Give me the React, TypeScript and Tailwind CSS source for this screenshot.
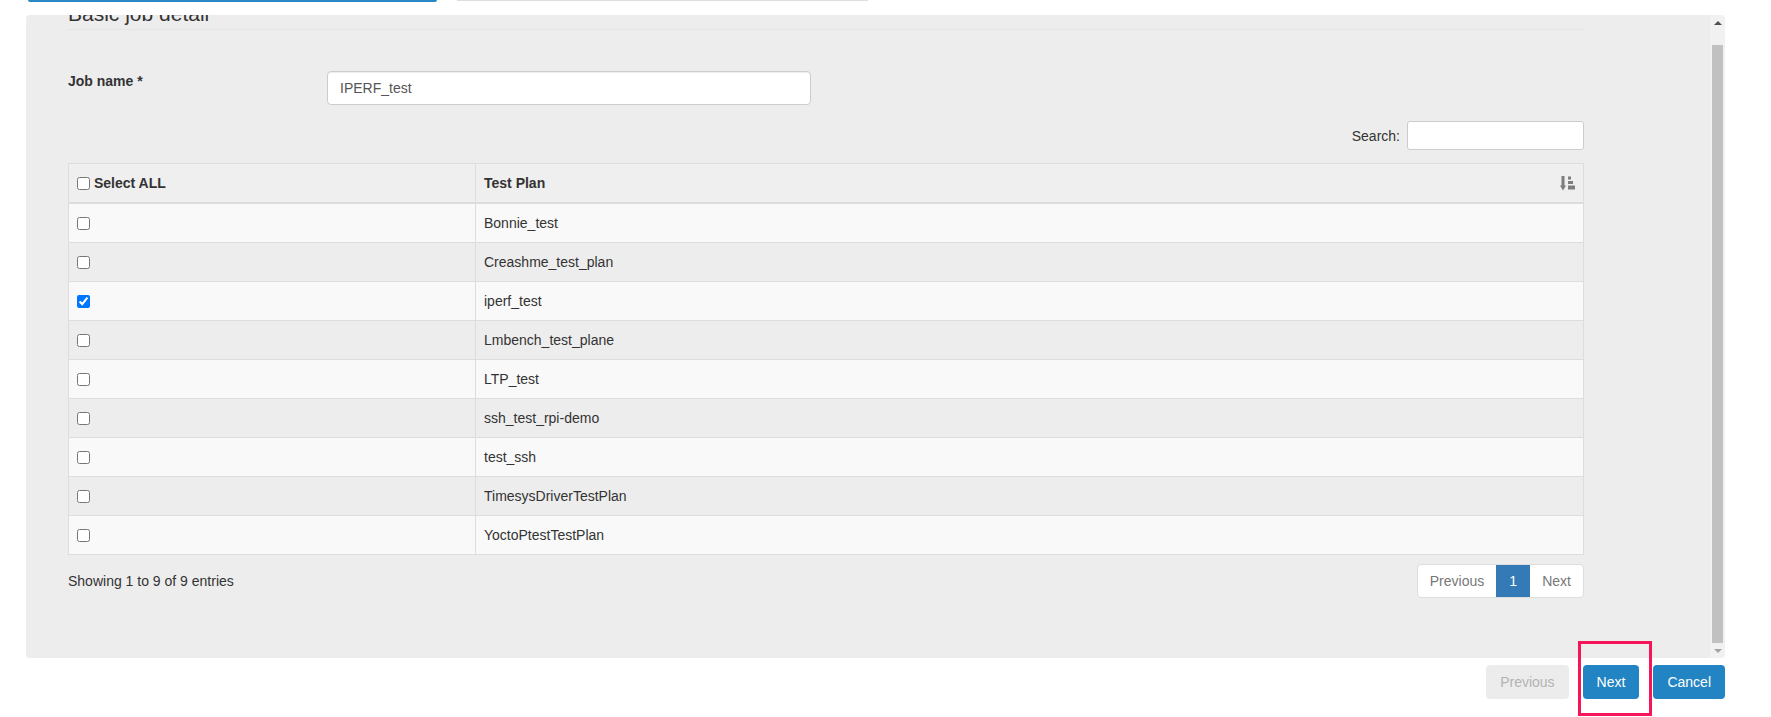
import { useState } from "react";

const testPlans = [
  "Bonnie_test",
  "Creashme_test_plan",
  "iperf_test",
  "Lmbench_test_plane",
  "LTP_test",
  "ssh_test_rpi-demo",
  "test_ssh",
  "TimesysDriverTestPlan",
  "YoctoPtestTestPlan",
];

// glyphicon-like "sort by attributes" marker in the table header
const SortIcon = () => (
  <svg width="15" height="15" viewBox="0 0 15 15" className="text-[#7d7d7d]" fill="currentColor">
    <rect x="1.5" y="0" width="3" height="10" />
    <path d="M0 9.5h6l-3 5z" />
    <rect x="8" y="0.5" width="3" height="3" />
    <rect x="8" y="5" width="5" height="3" />
    <rect x="8" y="9.5" width="7" height="4" />
  </svg>
);

const Scrollbar = () => (
  <div className="w-[15px] h-full bg-[#f1f1f1] flex flex-col items-center">
    <div className="h-[15px] w-full flex items-center justify-center">
      <div className="w-0 h-0 border-l-[4px] border-r-[4px] border-b-[4px] border-l-transparent border-r-transparent border-b-[#505050]" />
    </div>
    <div className="h-[15px]" />
    <div className="w-[11px] flex-1 bg-[#c1c1c1]" />
    <div className="h-[15px] w-full flex items-center justify-center">
      <div className="w-0 h-0 border-l-[4px] border-r-[4px] border-t-[4px] border-l-transparent border-r-transparent border-t-[#a3a3a3]" />
    </div>
  </div>
);

const App = () => {
  const [selected, setSelected] = useState<string[]>(["iperf_test"]);
  const [jobName, setJobName] = useState("IPERF_test");
  const [search, setSearch] = useState("");

  const toggle = (name: string) => {
    setSelected(prev => (prev.includes(name) ? prev.filter(n => n !== name) : [...prev, name]));
  };

  const allSelected = selected.length === testPlans.length;

  return (
    <div className="relative w-[1771px] h-[717px] overflow-hidden bg-white font-['Liberation_Sans',Arial,sans-serif] text-[14px] leading-[20px] text-[#333]">
      {/* tail of the wizard steps above */}
      <div className="h-[15px] flex items-start">
        <div className="ml-[28px] w-[409px] h-[2px] bg-[#2a86c5] rounded-b-[2px]" />
        <div className="ml-[20px] w-[411px] h-[1px] bg-[#dedede]" />
      </div>

      {/* scrolling wizard panel */}
      <div className="ml-[26px] w-[1699px] h-[643px] bg-[#ededed] rounded-[4px] overflow-hidden flex">
        <div className="flex-1 overflow-hidden">
          <div className="mt-[-16px] ml-[42px] w-[1516px]">
            <div className="h-[31px] border-b border-[#e5e5e5] text-[21px] leading-[30px] text-[#333]">
              Basic job detail
            </div>

            <div className="mt-[41px] flex">
              <label className="w-[259px] font-bold">Job name *</label>
              <input
                value={jobName}
                onChange={e => setJobName(e.target.value)}
                className="w-[484px] h-[34px] px-[12px] bg-white border border-[#ccc] rounded-[4px] text-[14px] text-[#555] shadow-[inset_0_1px_1px_rgba(0,0,0,0.075)] outline-none"
              />
            </div>

            <div className="mt-[16px] flex justify-end items-center">
              <label className="text-[14px]">Search:</label>
              <input
                value={search}
                onChange={e => setSearch(e.target.value)}
                className="ml-[7px] w-[177px] h-[29px] px-[10px] bg-white border border-[#ccc] rounded-[3px] outline-none"
              />
            </div>

            <div className="mt-[13px] border-t border-l border-r border-[#ddd]">
              <div className="flex h-[40px] bg-[#efefef] border-b-2 border-[#ddd] font-bold">
                <div className="w-[407px] border-r border-[#ddd] pl-[8px] flex items-center">
                  <input
                    type="checkbox"
                    checked={allSelected}
                    onChange={() => setSelected(allSelected ? [] : [...testPlans])}
                    className="m-0 w-[13px] h-[13px]"
                  />
                  <span className="ml-[4px]">Select ALL</span>
                </div>
                <div className="flex-1 pl-[8px] pr-[8px] flex items-center justify-between">
                  <span>Test Plan</span>
                  <SortIcon />
                </div>
              </div>

              {testPlans
                .filter(p => p.toLowerCase().includes(search.toLowerCase()))
                .map((plan, i) => (
                  <div
                    key={plan}
                    className={`flex h-[39px] border-b border-[#ddd] ${i % 2 === 0 ? "bg-[#f9f9f9]" : "bg-[#ededed]"}`}
                  >
                    <div className="w-[407px] border-r border-[#ddd] pl-[8px] flex items-center">
                      <input
                        type="checkbox"
                        checked={selected.includes(plan)}
                        onChange={() => toggle(plan)}
                        className="m-0 w-[13px] h-[13px]"
                      />
                    </div>
                    <div className="flex-1 pl-[8px] flex items-center">{plan}</div>
                  </div>
                ))}
            </div>

            <div className="mt-[9px] flex items-center justify-between">
              <div>Showing 1 to 9 of 9 entries</div>
              <div className="flex h-[34px] bg-white border border-[#ddd] rounded-[4px] text-[#777]">
                <span className="px-[12px] flex items-center">Previous</span>
                <span className="w-[34px] flex items-center justify-center bg-[#337ab7] text-white">1</span>
                <span className="px-[12px] flex items-center">Next</span>
              </div>
            </div>
          </div>
        </div>
        <Scrollbar />
      </div>

      {/* wizard actions */}
      <div className="mt-[7px] w-[1725px] flex justify-end gap-[14px]">
        <button disabled className="h-[34px] px-[14px] rounded-[4px] bg-[#ececec] text-[#b3b3b3]">
          Previous
        </button>
        <button className="h-[34px] px-[14px] rounded-[4px] bg-[#2384c3] text-white">Next</button>
        <button className="h-[34px] px-[14px] rounded-[4px] bg-[#2384c3] text-white">Cancel</button>
      </div>

      {/* highlight annotation around Next */}
      <div className="absolute left-[1578px] top-[641px] w-[74px] h-[75px] border-[3px] border-[#f7155a]" />
    </div>
  );
};

export default App;
